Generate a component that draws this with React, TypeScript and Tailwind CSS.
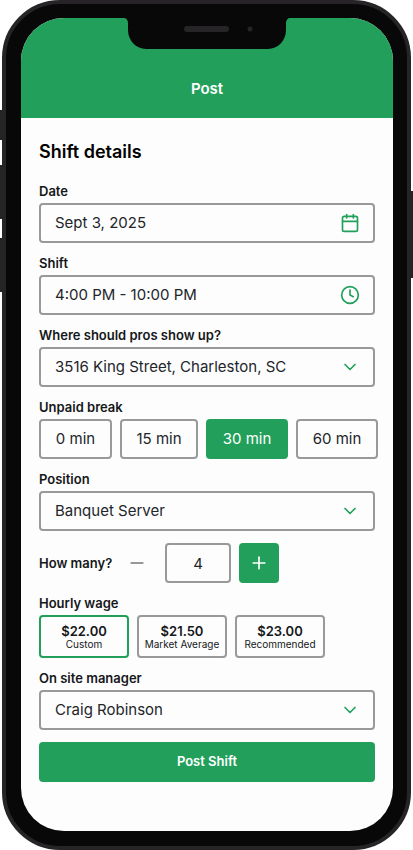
import { ReactNode, useState } from "react";
import { Calendar, ChevronDown, Clock, Minus, Plus } from "lucide-react";

const BREAKS = [
  { label: "0 min", width: "w-[73px]" },
  { label: "15 min", width: "w-[78px]" },
  { label: "30 min", width: "w-[82px]" },
  { label: "60 min", width: "w-[82px]" },
];

const WAGES = [
  { amount: "$22.00", label: "Custom" },
  { amount: "$21.50", label: "Market Average" },
  { amount: "$23.00", label: "Recommended" },
];

const labelClass = "text-[13px] leading-4 font-semibold text-[#15171a]";
const boxClass = "h-10 rounded border-2 border-[#999] text-[15px] text-[#22252a]";

interface FieldProps {
  id: string;
  label: string;
  value: string;
}

function TextField({ id, label, value, icon }: FieldProps & { icon: ReactNode }) {
  return (
    <div className="flex flex-col gap-1">
      <label htmlFor={id} className={labelClass}>
        {label}
      </label>
      <div className={`flex items-center pl-3.5 pr-[13px] ${boxClass}`}>
        <input id={id} type="text" defaultValue={value} className="min-w-0 flex-1 outline-none" />
        {icon}
      </div>
    </div>
  );
}

function SelectField({ id, label, value }: FieldProps) {
  return (
    <div className="flex flex-col gap-1">
      <label htmlFor={id} className={labelClass}>
        {label}
      </label>
      <div className="relative">
        <select
          id={id}
          defaultValue={value}
          className={`w-full appearance-none pl-3.5 pr-10 outline-none ${boxClass}`}
        >
          <option>{value}</option>
        </select>
        <ChevronDown
          size={20}
          className="pointer-events-none absolute right-[15px] top-2.5 text-[#22a05b]"
        />
      </div>
    </div>
  );
}

function Notch() {
  return (
    <svg
      width="166"
      height="31"
      viewBox="0 0 166 31"
      className="absolute left-1/2 top-0 -translate-x-1/2"
      aria-hidden="true"
    >
      <path
        d="M0 0A4 5 0 0 1 4 5V12A18 19 0 0 0 22 31H144A18 19 0 0 0 162 12V5A4 5 0 0 1 166 0Z"
        fill="#080808"
      />
      <rect x="60" y="8" width="45" height="6" rx="3" fill="#262427" />
      <circle cx="126" cy="11" r="2.5" fill="#262427" />
    </svg>
  );
}

export default function App() {
  const [breakTime, setBreakTime] = useState("30 min");
  const [wage, setWage] = useState("Custom");
  const [count, setCount] = useState(4);

  return (
    <div className="relative bg-white px-0.5 font-['Inter',sans-serif]">
      {/* Side buttons of the phone */}
      <div className="absolute left-0 top-[110px] h-[30px] w-1 bg-[#262427]" />
      <div className="absolute left-0 top-[165px] h-[54px] w-1 bg-[#262427]" />
      <div className="absolute left-0 top-[238px] h-[54px] w-1 bg-[#262427]" />
      <div className="absolute right-0 top-[191px] h-[87px] w-1 bg-[#262427]" />

      <div className="relative rounded-[58px] border-4 border-[#262427] bg-[#080808] pb-[15px] pl-[15px] pr-3.5 pt-3.5">
        <div className="relative overflow-hidden rounded-[43px] bg-[#fdfdfd]">
          <Notch />
          <header className="flex h-[100px] items-end justify-center bg-[#22a05b] pb-[19px]">
            <h1 className="text-[15px] leading-5 font-semibold text-white">Post</h1>
          </header>

          <form
            className="flex flex-col gap-3 px-[18px] pb-[49px] pt-[22px]"
            onSubmit={(e) => e.preventDefault()}
          >
            <h2 className="mb-[7px] text-lg leading-6 font-semibold text-black">
              Shift details
            </h2>

            <TextField
              id="date"
              label="Date"
              value="Sept 3, 2025"
              icon={<Calendar size={20} className="text-[#22a05b]" />}
            />
            <TextField
              id="shift"
              label="Shift"
              value="4:00 PM - 10:00 PM"
              icon={<Clock size={20} className="text-[#22a05b]" />}
            />
            <SelectField
              id="location"
              label="Where should pros show up?"
              value="3516 King Street, Charleston, SC"
            />

            <div className="flex flex-col gap-1" role="group" aria-labelledby="break-label">
              <span id="break-label" className={labelClass}>
                Unpaid break
              </span>
              <div className="flex gap-2">
                {BREAKS.map((b) => (
                  <button
                    key={b.label}
                    type="button"
                    aria-pressed={b.label === breakTime}
                    onClick={() => setBreakTime(b.label)}
                    className={`h-10 shrink-0 rounded border-2 text-[15px] whitespace-nowrap ${b.width} ${
                      b.label === breakTime
                        ? "border-[#22a05b] bg-[#22a05b] text-white"
                        : "border-[#999] text-[#22252a]"
                    }`}
                  >
                    {b.label}
                  </button>
                ))}
              </div>
            </div>

            <SelectField id="position" label="Position" value="Banquet Server" />

            <div className="flex items-center">
              <label htmlFor="count" className={`w-[78px] whitespace-nowrap ${labelClass}`}>
                How many?
              </label>
              <button
                type="button"
                aria-label="Fewer"
                onClick={() => setCount(Math.max(1, count - 1))}
                className="mr-2 flex size-10 items-center justify-center text-[#777]"
              >
                <Minus size={20} />
              </button>
              <input
                id="count"
                type="text"
                inputMode="numeric"
                value={count}
                onChange={(e) => setCount(Number(e.target.value) || 0)}
                className={`mr-2 w-[66px] text-center outline-none ${boxClass}`}
              />
              <button
                type="button"
                aria-label="More"
                onClick={() => setCount(count + 1)}
                className="flex size-10 items-center justify-center rounded bg-[#22a05b] text-white"
              >
                <Plus size={20} />
              </button>
            </div>

            <div className="flex flex-col gap-1" role="group" aria-labelledby="wage-label">
              <span id="wage-label" className={labelClass}>
                Hourly wage
              </span>
              <div className="flex gap-2">
                {WAGES.map((w) => (
                  <button
                    key={w.label}
                    type="button"
                    aria-pressed={w.label === wage}
                    onClick={() => setWage(w.label)}
                    className={`flex h-[43px] w-[90px] flex-col items-center justify-center rounded border-2 whitespace-nowrap text-[#15171a] ${
                      w.label === wage ? "border-[#22a05b]" : "border-[#999]"
                    }`}
                  >
                    <span className="text-[13px] leading-[14px] font-semibold">{w.amount}</span>
                    <span className="text-[10px] leading-3">{w.label}</span>
                  </button>
                ))}
              </div>
            </div>

            <SelectField id="manager" label="On site manager" value="Craig Robinson" />

            <button
              type="submit"
              className="h-10 rounded bg-[#22a05b] text-[13px] font-semibold text-white"
            >
              Post Shift
            </button>
          </form>
        </div>
      </div>
    </div>
  );
}
